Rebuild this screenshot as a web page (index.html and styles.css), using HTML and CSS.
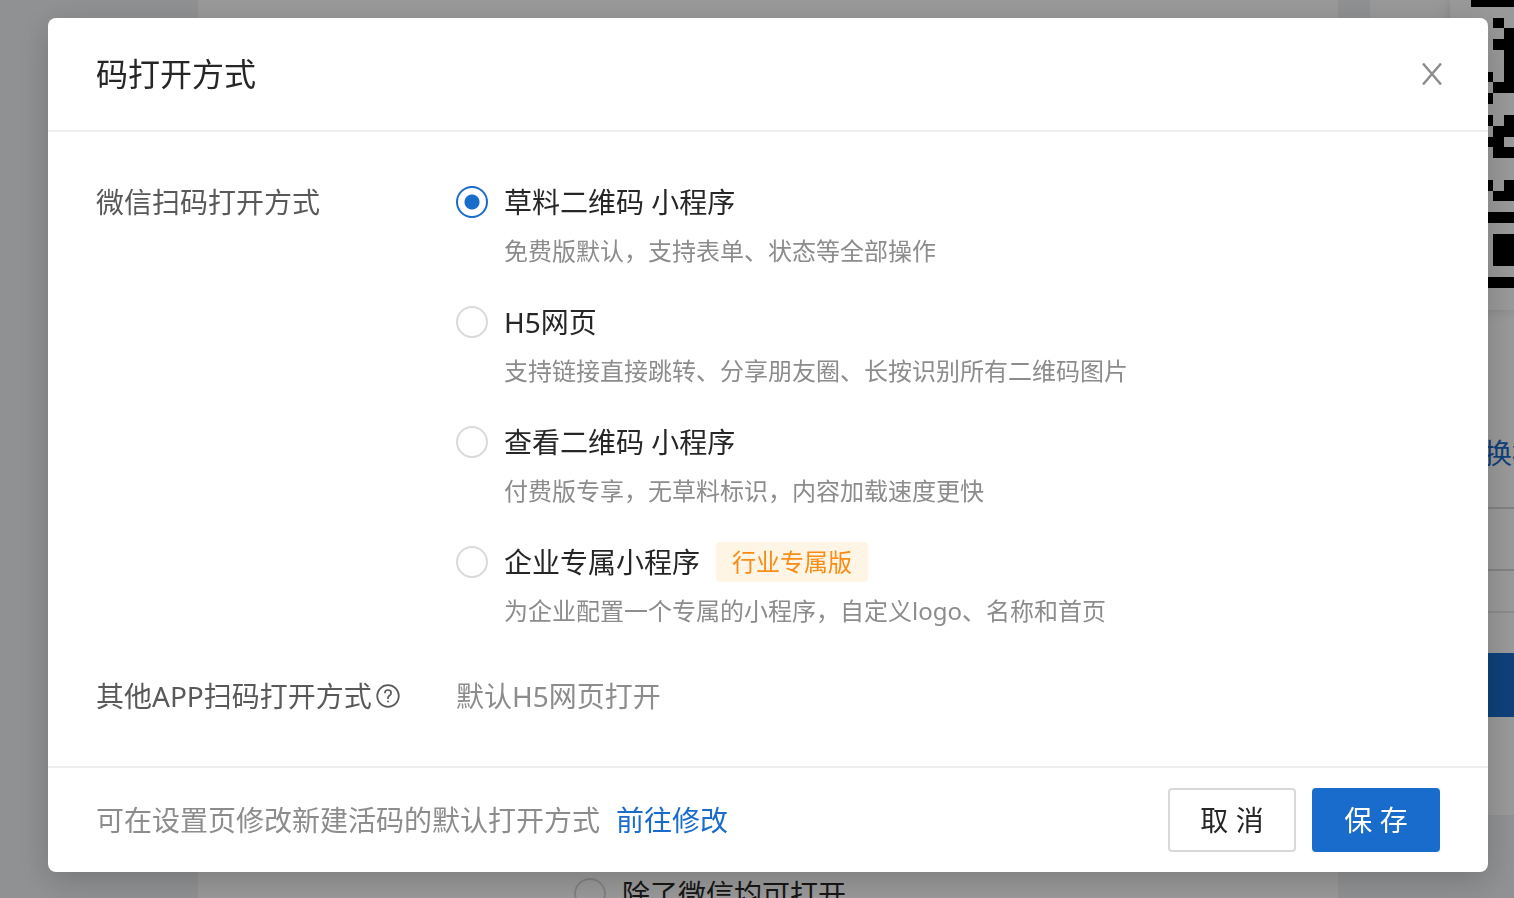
FILE: index.html
```html
<!DOCTYPE html>
<html lang="zh-CN">
<head>
<meta charset="utf-8">
<title>码打开方式</title>
<link rel="stylesheet" href="styles.css">
</head>
<body>
<div class="page" inert>
  <main class="page-main">
    <label class="option-title"><input class="radio" type="radio" name="scope">除了微信均可打开</label>
  </main>
  <aside class="side">
    <div class="qr-card">
      <svg class="qr" viewBox="0 0 64 288" width="64" height="288" shape-rendering="crispEdges" aria-hidden="true">
        <path d="M21 0h43v7H21zM43 18h11v10H43zM54 28h10v65H54zM43 39h11v11H43zM43 82h11v11H43zM32 72h11v10H32zM32 93h11v11H32zM32 115h11v11H32zM54 115h10v11H54zM43 126h21v11H43zM32 137h22v10H32zM43 147h21v11H43zM32 180h11v11H32zM54 180h10v11H54zM43 191h21v10H43zM32 212h32v11H32zM43 234h21v32H43zM32 277h32v11H32z"/>
      </svg>
    </div>
    <a class="side-link" href="#">换标</a>
    <div class="side-field"></div>
    <div class="side-rule"></div>
    <button class="side-button" type="button" aria-label="下载"></button>
  </aside>
</div>
<div class="mask">
  <section class="modal" role="dialog" aria-labelledby="dialog-title">
    <header class="modal-header">
      <h1 class="modal-title" id="dialog-title">码打开方式</h1>
      <button class="close" type="button" aria-label="关闭">
        <svg viewBox="0 0 22 22" width="22" height="22"><path d="M2 0.5L20 21.5M20 0.5L2 21.5" fill="none" stroke="currentColor" stroke-width="2.4"/></svg>
      </button>
    </header>
    <div class="modal-body">
      <div class="form-row">
        <div class="form-label" id="wechat-label">微信扫码打开方式</div>
        <div class="options" role="radiogroup" aria-labelledby="wechat-label">
          <div class="option">
            <label class="option-title"><input class="radio" type="radio" name="mode" checked>草料二维码 小程序</label>
            <p class="option-note">免费版默认，支持表单、状态等全部操作</p>
          </div>
          <div class="option">
            <label class="option-title"><input class="radio" type="radio" name="mode">H5网页</label>
            <p class="option-note">支持链接直接跳转、分享朋友圈、长按识别所有二维码图片</p>
          </div>
          <div class="option">
            <label class="option-title"><input class="radio" type="radio" name="mode">查看二维码 小程序</label>
            <p class="option-note">付费版专享，无草料标识，内容加载速度更快</p>
          </div>
          <div class="option">
            <label class="option-title"><input class="radio" type="radio" name="mode">企业专属小程序<span class="tag">行业专属版</span></label>
            <p class="option-note">为企业配置一个专属的小程序，自定义logo、名称和首页</p>
          </div>
        </div>
      </div>
      <div class="form-row">
        <div class="form-label">其他APP扫码打开方式<svg class="help" viewBox="0 0 24 24" width="24" height="24" fill="none" stroke="currentColor" stroke-width="1.7" aria-hidden="true"><circle cx="12" cy="12" r="10.8"/><path d="M8.900 9.200C8.900 7.200 10.100 6 12 6s3.100 1.200 3.100 2.900c0 1.400-.8 2.200-1.800 2.900-1 .7-1.300 1.300-1.300 2.400v.9"/><circle cx="12" cy="17.500" r="1" fill="currentColor" stroke="none"/></svg></div>
        <div class="form-value">默认H5网页打开</div>
      </div>
    </div>
    <footer class="modal-footer">
      <p class="footer-note">可在设置页修改新建活码的默认打开方式<a class="link" href="#">前往修改</a></p>
      <button class="button" type="button">取 消</button>
      <button class="button button-primary" type="button">保 存</button>
    </footer>
  </section>
</div>
</body>
</html>
```
FILE: styles.css
```css
* { box-sizing: border-box; }

body {
  margin: 0;
  height: 100vh;
  overflow: hidden;
  background: #f0f2f5;
  color: #262626;
  font-family: "Noto Sans", "Noto Sans CJK SC", sans-serif;
  font-size: 28px;
  font-weight: 400;
  line-height: 48px;
}

h1, p { margin: 0; font-weight: inherit; }
button, input { font: inherit; }
a { color: #196bcc; text-decoration: none; }

/* Page behind the dialog */
.page {
  display: flex;
  gap: 32px;
  height: 100vh;
  padding-left: 198px;
  overflow: hidden;
}
.page-main {
  flex: 1;
  display: flex;
  align-items: flex-end;
  padding-left: 376px;
  background: #fff;
}
.page-main .option-title { margin-bottom: -20px; }
.side {
  display: flex;
  flex-direction: column;
  align-self: flex-start;
  width: 144px;
  height: 815px;
  padding-left: 80px;
  background: #fff;
}
.qr-card {
  height: 310px;
  box-shadow: 0 0 12px rgba(0, 0, 0, 0.15);
}
.qr { display: block; }
.side-link {
  margin: 119px 0 30px 34px;
  white-space: nowrap;
}
.side-field {
  height: 64px;
  border: 2px solid #d9d9d9;
  border-width: 2px 0;
}
.side-rule { margin-top: 40px; border-top: 2px solid #e8e8e8; }
.side-button {
  height: 64px;
  margin-top: 40px;
  border: 0;
  background: #196bcc;
}

/* Dialog */
.mask {
  position: fixed;
  inset: 0;
  padding: 18px 26px 26px 48px;
  background: rgba(0, 0, 0, 0.4);
}
.modal {
  border-radius: 8px;
  background: #fff;
  box-shadow: 0 8px 32px rgba(0, 0, 0, 0.2);
}
.modal-header {
  display: flex;
  align-items: center;
  justify-content: space-between;
  padding: 32px 45px 32px 48px;
  border-bottom: 2px solid #eee;
}
.modal-title { font-size: 32px; line-height: 48px; }
.close {
  display: flex;
  padding: 0;
  border: 0;
  background: none;
  color: #8c8c8c;
}
.modal-body {
  display: flex;
  flex-direction: column;
  gap: 36px;
  padding: 46px 48px;
}
.form-row { display: flex; }
.form-label {
  display: flex;
  align-items: center;
  align-self: flex-start;
  width: 360px;
  color: #595959;
}
.help { margin-left: 4px; }
.form-value { color: #8c8c8c; }
.options { display: flex; flex-direction: column; gap: 22px; }
.option-title { display: flex; align-items: center; }
.option-note {
  padding-left: 48px;
  color: #8c8c8c;
  font-size: 24px;
  line-height: 50px;
}
.radio {
  appearance: none;
  width: 32px;
  height: 32px;
  margin: 0 16px 0 0;
  border: 2px solid #d9d9d9;
  border-radius: 50%;
  background: #fff;
}
.radio:checked {
  border-color: #196bcc;
  background: radial-gradient(circle, #196bcc 7px, #fff 8px);
}
.tag {
  margin-left: 16px;
  padding: 0 16px;
  border-radius: 4px;
  background: #fff5e5;
  color: #fa8c16;
  font-size: 24px;
  line-height: 40px;
}
.modal-footer {
  display: flex;
  align-items: center;
  gap: 16px;
  padding: 20px 48px;
  border-top: 2px solid #eee;
}
.footer-note { flex: 1; color: #8c8c8c; }
.link { margin-left: 16px; }
.button {
  width: 128px;
  height: 64px;
  padding: 0;
  border: 2px solid #d9d9d9;
  border-radius: 4px;
  background: #fff;
  color: #262626;
}
.button-primary { border-color: #196bcc; background: #196bcc; color: #fff; }
```
